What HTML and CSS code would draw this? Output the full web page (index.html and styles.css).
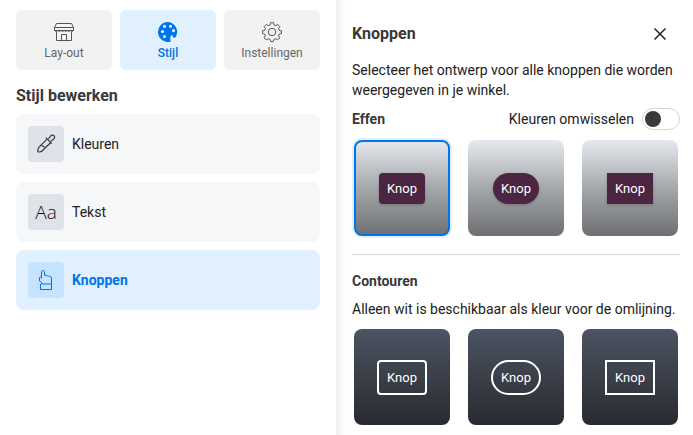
FILE: index.html
```html
<!DOCTYPE html>
<html lang="nl">
<head>
    <meta charset="UTF-8">
    <meta name="viewport" content="width=device-width, initial-scale=1.0">
    <title>Stijl bewerken</title>
    <link rel="stylesheet" href="styles.css">
</head>
<body>
    <div class="sidebar">
        <nav class="tabs">
            <button class="tab">
                <svg width="20" height="20" viewBox="0 0 20 20" fill="none" stroke="currentColor">
                    <path d="M2.500 1.500h15l2 4v3h-19v-3zM.5 5.500h19M2.500 9.500v9h15v-9M7.500 18.500v-6h5v6"/>
                    <path d="M.5 8.500q1.600 2 3.200 0q1.600 2 3.200 0q1.600 2 3.200 0q1.600 2 3.200 0q1.600 2 3.200 0q1.500 2 3 0"/>
                </svg>
                <span>Lay-out</span>
            </button>
            <button class="tab active">
                <svg width="20" height="20" viewBox="0 0 20 20">
                    <path fill="currentColor" fill-rule="evenodd" d="M10 0a10 10 0 1 0 2 19.800c.7-.2.900-.8.600-1.500-.8-1.600-.5-3.500.4-4.500.8-.9 1.600-.5 1.800.4.300 1.200 1.200 1.800 2.400 1.600A10 10 0 0 0 10 0zM6.500 2.700a1.600 1.600 0 1 1 0 3.200 1.600 1.600 0 0 1 0-3.200zM12.500 2.700a1.600 1.600 0 1 1 0 3.200 1.600 1.600 0 0 1 0-3.200zM15.500 7a1.600 1.600 0 1 1 0 3.200 1.600 1.600 0 0 1 0-3.200zM4.500 8a1.600 1.600 0 1 1 0 3.200 1.600 1.600 0 0 1 0-3.200zM6.500 13a1.600 1.600 0 1 1 0 3.200 1.600 1.600 0 0 1 0-3.200z"/>
                </svg>
                <span>Stijl</span>
            </button>
            <button class="tab">
                <svg width="20" height="20" viewBox="0 0 20 20" fill="none" stroke="currentColor" stroke-linejoin="round">
                    <path d="M8.500.7h3l.6 2.300 1.700.7 2-1.200 2 2-1.200 2 .7 1.900 2.200.5v2.500l-2.200.6-.8 1.900 1.200 2-2 2-2-1.200-1.800.8-.7 2h-2.500l-.6-2-1.900-.8-2 1.200-2-2 1.200-2-.8-1.900-2.200-.6v-2.500l2.200-.5.8-1.900-1.200-2 2-2 2 1.200 1.800-.7z"/>
                    <circle cx="10" cy="10" r="3.700"/>
                </svg>
                <span>Instellingen</span>
            </button>
        </nav>

        <h2>Stijl bewerken</h2>

        <div class="menu">
            <button class="menuItem">
                <span class="menuIcon">
                    <svg width="20" height="20" viewBox="0 0 20 20" fill="none" stroke="currentColor" stroke-width="1.200">
                        <path d="M11.300 4.800L3 13.200c-.8.9-.6 1.800-1.200 2.900-.5 1 0 2 1.200 1.900 1.200-.1 2.400-.3 3.100-1L14.700 8.500M9.800 3.700l6 6M12.300 5l2.300-2.900c1-1.200 2.300-1.300 3.300-.4 1 1 .9 2.300-.2 3.300l-3 2.400M5 11.300l4.500 2.200"/>
                    </svg>
                </span>
                <span>Kleuren</span>
            </button>
            <button class="menuItem">
                <span class="menuIcon letters">Aa</span>
                <span>Tekst</span>
            </button>
            <button class="menuItem active">
                <span class="menuIcon">
                    <svg width="20" height="20" viewBox="0 0 20 20" fill="none" stroke="currentColor">
                        <path d="M5.500 14v-1.500L3.500 11V7.500l2-1V2c0-2 3-2 3 0v3.500c1.200-.5 2.300-.2 2.700.5 1-.4 2 0 2.300.5 1.200-.2 2 .4 2 1.500v6zM4.500 14v5.500h11V14"/>
                        <path d="M5.500 6.500v2"/>
                    </svg>
                </span>
                <span>Knoppen</span>
            </button>
        </div>
    </div>

    <div class="panel">
        <div class="panelHeader">
            <h2>Knoppen</h2>
            <button class="close" aria-label="Sluiten">
                <svg width="12" height="12" viewBox="0 0 12 12" fill="none" stroke="currentColor" stroke-width="1.500">
                    <path d="M.5.5l11 11M11.500.5l-11 11"/>
                </svg>
            </button>
        </div>
        <p class="intro">Selecteer het ontwerp voor alle knoppen die worden weergegeven in je winkel.</p>

        <div class="row">
            <h3>Effen</h3>
            <label class="swap" for="swapColors">
                Kleuren omwisselen
                <input type="checkbox" role="switch" id="swapColors">
            </label>
        </div>
        <div class="options">
            <button class="option solid selected"><span class="sample rounded">Knop</span></button>
            <button class="option solid"><span class="sample pill">Knop</span></button>
            <button class="option solid"><span class="sample">Knop</span></button>
        </div>

        <hr>

        <h3>Contouren</h3>
        <p class="note">Alleen wit is beschikbaar als kleur voor de omlijning.</p>
        <div class="options">
            <button class="option outline"><span class="sample rounded">Knop</span></button>
            <button class="option outline"><span class="sample pill">Knop</span></button>
            <button class="option outline"><span class="sample">Knop</span></button>
        </div>
    </div>
</body>
</html>
```
FILE: styles.css
```css
* {
    box-sizing: border-box;
}

body {
    margin: 0;
    min-height: 100vh;
    display: flex;
    font-family: Roboto, Arial, sans-serif;
    font-size: 14px;
    line-height: 20px;
    color: #212121;
    background-color: #fff;
}

button {
    font: inherit;
    color: inherit;
    border: none;
    padding: 0;
    cursor: pointer;
}

h2, h3, p {
    margin: 0;
}

h2 {
    font-size: 16px;
    line-height: 20px;
    color: #393939;
}

h3 {
    font-size: 14px;
    color: #393939;
}

.sidebar {
    flex: 1;
    padding: 10px 16px;
}

.tabs {
    display: flex;
    gap: 8px;
    margin-bottom: 16px;
}

.tab {
    flex: 1;
    display: flex;
    flex-direction: column;
    align-items: center;
    gap: 3px;
    padding: 12px 0 9px;
    border-radius: 6px;
    background-color: #f2f2f2;
    color: #666;
    font-size: 12px;
    line-height: 16px;
}

.tab svg {
    color: #555;
}

.tab.active {
    background-color: #e0f0fe;
    color: #0070e0;
    font-weight: 500;
}

.tab.active svg {
    color: #0073ea;
}

/* style menu */
.menu {
    display: flex;
    flex-direction: column;
    gap: 8px;
    margin-top: 8px;
}

.menuItem {
    display: flex;
    align-items: center;
    gap: 8px;
    padding: 12px;
    border-radius: 8px;
    background-color: #f6f7f9;
}

.menuIcon {
    display: flex;
    align-items: center;
    justify-content: center;
    width: 36px;
    height: 36px;
    border-radius: 4px;
    background-color: #dfe2e9;
    color: #393939;
}

.letters {
    font-family: "Open Sans", sans-serif;
    font-size: 19px;
    font-weight: 300;
    color: #111;
}

.menuItem.active {
    background-color: #e0f0fe;
    color: #0073ea;
    font-weight: 700;
}

.menuItem.active .menuIcon {
    background-color: #c5e2ff;
    color: #0073ea;
}

/* right panel */
.panel {
    flex: 0 0 357px;
    padding: 24px 13px 10px 16px;
    background: linear-gradient(to right, #f0f0f0, #fff 10px);
}

.panelHeader,
.row {
    display: flex;
    align-items: center;
    justify-content: space-between;
}

.close {
    display: flex;
    align-items: center;
    justify-content: center;
    width: 20px;
    height: 20px;
    margin-right: 10px;
    background: none;
    color: #212121;
}

.intro {
    margin-top: 16px;
}

.row {
    margin-top: 8px;
}

.swap {
    display: flex;
    align-items: center;
    gap: 8px;
}

.swap input {
    appearance: none;
    display: flex;
    align-items: center;
    width: 38px;
    height: 22px;
    margin: 0;
    padding: 2px;
    border: 1px solid #d4d4d4;
    border-radius: 11px;
    background-color: #fff;
    cursor: pointer;
}

.swap input::before {
    content: "";
    width: 16px;
    height: 16px;
    border-radius: 50%;
    background-color: #393939;
}

.swap input:checked {
    justify-content: flex-end;
}

.options {
    display: flex;
    justify-content: space-between;
    margin-top: 10px;
    padding: 0 2px;
}

.option {
    display: flex;
    align-items: center;
    justify-content: center;
    width: 96px;
    height: 96px;
    border-radius: 8px;
}

.solid {
    background: linear-gradient(#e6eaf0, #a4a8aa 50%, #6e6f72) border-box;
}

.outline {
    background: linear-gradient(#4c5362, #282b30);
}

.selected {
    border: 2px solid #0073ea;
    box-shadow: 0 0 0 2px #e0f0fe;
}

.sample {
    padding: 7px 8px;
    color: #fff;
    font-size: 13px;
    line-height: 17px;
}

.solid .sample {
    background-color: #4b2542;
    box-shadow: 0 1px 3px rgba(0, 0, 0, 0.2);
}

.outline .sample {
    border: 2px solid #fff;
}

.rounded {
    border-radius: 4px;
}

.pill {
    border-radius: 18px;
}

hr {
    margin: 18px 0 16px;
    border: none;
    border-top: 1px solid #d4d4d4;
}

.note {
    margin-top: 8px;
}
```
